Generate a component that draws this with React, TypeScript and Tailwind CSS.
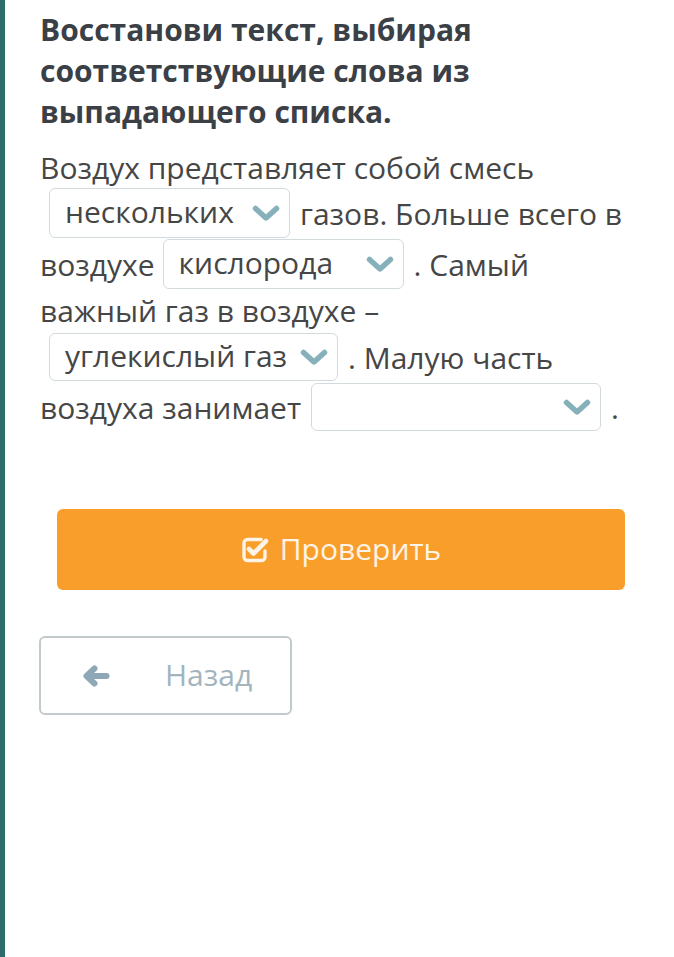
import React from "react";

const Chevron = () => (
  <svg width="28" height="17" viewBox="0 0 28 17" className="shrink-0">
    <path d="M3.5 3.5 L14 13 L24.5 3.5" fill="none" stroke="#86b1ba" strokeWidth="5.5" strokeLinecap="round" strokeLinejoin="round" />
  </svg>
);

const Select = ({ value, w, h, className = "" }: { value: string; w: string; h: string; className?: string }) => (
  <div
    className={`flex items-center justify-between border border-[#d2dadd] rounded-[6px] pl-[15px] pr-[9px] bg-white ${w} ${h} ${className}`}
  >
    <span className="leading-none -mt-[3px] whitespace-nowrap">{value}</span>
    <Chevron />
  </div>
);

export default function App() {
  return (
    <div
      className="w-[674px] h-[957px] flex bg-white text-[#464646]"
      style={{ fontFamily: '"Open Sans", "Noto Sans", sans-serif' }}
    >
      <div className="w-[5px] shrink-0 bg-[#2e6b6c]" />
      <div className="flex-1 pl-[35px] pr-[30px]">
        <h1 className="pt-[9px] text-[30px] leading-[41px] font-bold text-[#3b4046] whitespace-nowrap">
          Восстанови текст, выбирая
          <br />
          соответствующие слова из
          <br />
          выпадающего списка.
        </h1>
        <div className="mt-[15px] text-[30px] whitespace-nowrap">
          <div className="h-[40px] flex items-center">Воздух представляет собой смесь</div>
          <div className="h-[52px] flex items-center">
            <Select value="нескольких" w="w-[241px]" h="h-[50px]" className="ml-[9px]" />
            <span className="ml-[10px]">газов. Больше всего в</span>
          </div>
          <div className="h-[50px] flex items-center">
            <span>воздухе</span>
            <Select value="кислорода" w="w-[241px]" h="h-[50px]" className="ml-[8px]" />
            <span className="ml-[10px]">. Самый</span>
          </div>
          <div className="h-[43px] flex items-center">важный газ в воздухе –</div>
          <div className="h-[50px] flex items-center">
            <Select value="углекислый газ" w="w-[289px]" h="h-[48px]" className="ml-[9px]" />
            <span className="ml-[10px]">. Малую часть</span>
          </div>
          <div className="h-[50px] flex items-center">
            <span>воздуха занимает</span>
            <Select value="" w="w-[290px]" h="h-[48px]" className="ml-[10px]" />
            <span className="ml-[10px]">.</span>
          </div>
        </div>
        <button className="mt-[77px] ml-[17px] w-[568px] h-[81px] rounded-[6px] bg-[#fa9e2b] flex items-center justify-center gap-[11px] text-[30px] text-[#fdf3e6]">
          <svg width="28" height="27" viewBox="0 0 28 27">
            <path d="M20 3.5 H6.5 a3.5 3.5 0 0 0 -3.5 3.5 v14 a3.5 3.5 0 0 0 3.5 3.5 h14 a3.5 3.5 0 0 0 3.5 -3.5 v-6" fill="none" stroke="#fdf3e6" strokeWidth="3.4" strokeLinecap="round" />
            <path d="M8 13 L12.5 17.5 L25 5" fill="none" stroke="#fdf3e6" strokeWidth="4.6" strokeLinecap="round" strokeLinejoin="round" />
          </svg>
          <span className="-mt-[3px]">Проверить</span>
        </button>
        <button className="mt-[46px] -ml-[1px] w-[253px] h-[79px] rounded-[6px] border-2 border-[#c3cacd] bg-white flex items-center text-[30px] text-[#a3b4bd]">
          <svg width="28" height="22" viewBox="0 0 28 22" className="ml-[41px]">
            <path d="M12.5 3.5 L4.5 11 L12.5 18.5 M6 11 H24.5" fill="none" stroke="#8fa8b7" strokeWidth="6" strokeLinecap="round" strokeLinejoin="round" />
          </svg>
          <span className="ml-[55px] -mt-[3px]">Назад</span>
        </button>
      </div>
    </div>
  );
}
